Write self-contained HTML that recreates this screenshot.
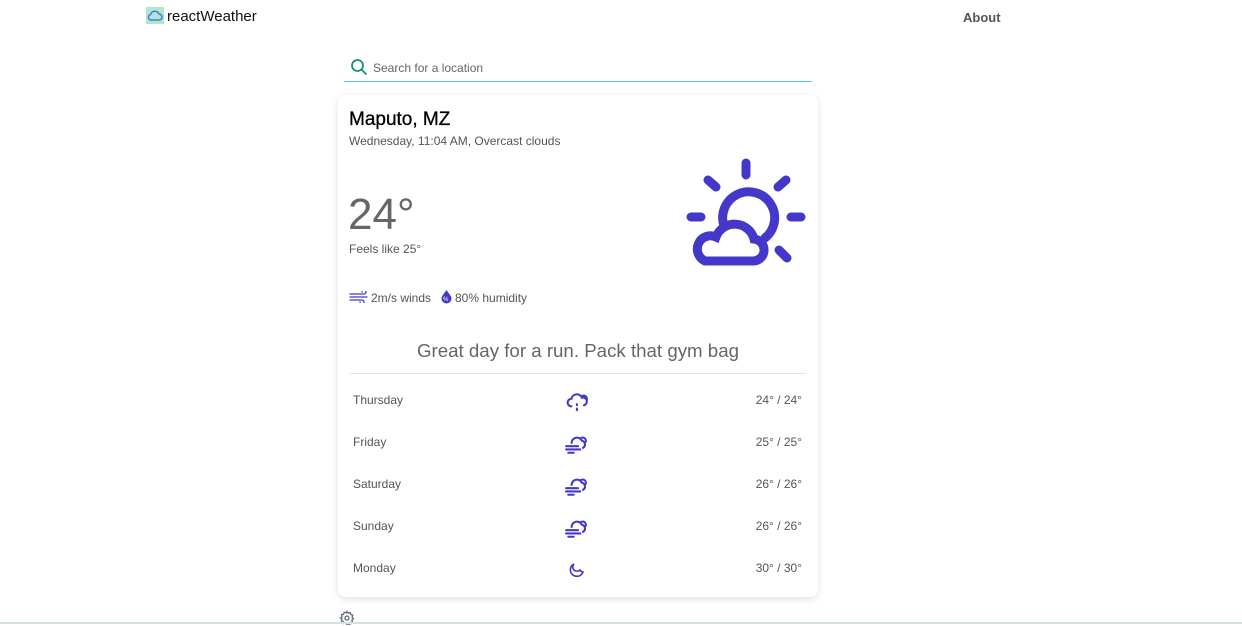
<!DOCTYPE html>
<html><head><meta charset="utf-8"><style>
*{margin:0;padding:0;box-sizing:border-box}
body{width:1242px;height:624px;background:#fff;font-family:"Liberation Sans",sans-serif;position:relative;overflow:hidden;color:#222}
.abs{position:absolute}
.card{left:338px;top:95px;width:480px;height:502px;border-radius:8px;background:#fff;box-shadow:0 2px 8px rgba(0,0,0,.13)}
.row{position:absolute;left:353px;width:451px;font-size:12px;color:#555}
.row .t{position:absolute;right:2px;top:0}
</style></head><body>
<div class="abs" style="left:146px;top:7px;width:18px;height:17px;background:#a8ecc9"></div>
<svg class="abs" style="left:146px;top:7px" width="18" height="17" viewBox="0 0 18 17"><path d="M5 13h8a3 3 0 0 0 0-6 4.5 4.5 0 0 0-8.5 0.5A2.8 2.8 0 0 0 5 13z" fill="none" stroke="#6366f1" stroke-width="1.5"/></svg>
<div class="abs" style="left:167px;top:8px;font-size:15px;color:#111">reactWeather</div>
<div class="abs" style="left:963px;top:10px;font-size:13px;color:#555;font-weight:bold">About</div>
<svg class="abs" style="left:350px;top:58px" width="18" height="18" viewBox="0 0 18 18"><circle cx="7.5" cy="7.5" r="5.5" fill="none" stroke="#16936b" stroke-width="1.8"/><path d="M11.5 11.5l4.5 4.5" stroke="#16936b" stroke-width="1.8" stroke-linecap="round"/></svg>
<div class="abs" style="left:373px;top:61px;font-size:12px;color:#666">Search for a location</div>
<div class="abs" style="left:344px;top:81px;width:468px;height:1px;background:#4fd9a3"></div>
<div class="abs card"></div>
<div class="abs" style="left:349px;top:109px;font-size:19px;color:#000;-webkit-text-stroke:0.3px #000">Maputo, MZ</div>
<div class="abs" style="left:349px;top:134px;font-size:12px;color:#555">Wednesday, 11:04 AM, Overcast clouds</div>
<div class="abs" style="left:348px;top:190px;font-size:44px;color:#666;font-weight:300">24°</div>
<div class="abs" style="left:349px;top:242px;font-size:12px;color:#555">Feels like 25°</div>
<svg class="abs" style="left:680px;top:155px" width="130" height="115" viewBox="680 155 130 115" fill="none" stroke="#4338ca" stroke-width="9" stroke-linecap="round">
<path d="M746 163v12M691 217h10M791 217h10M708 180l8 7M786 180l-8 7M779 250l8 8"/>
<path d="M724 226A26 26 0 1 1 765 238"/>
<path d="M705 261h47a11 11 0 0 0 2-22a20 20 0 0 0-38-2a12 12 0 0 0-11 24z" fill="#fff"/>
</svg>
<svg class="abs" style="left:349px;top:291px" width="20" height="12" viewBox="0 0 20 12" fill="none" stroke="#4338ca" stroke-width="1.3" stroke-linecap="round"><path d="M1 3h14a2 2 0 1 0-2-2M1 6h17M1 9h12a2 2 0 1 1-2 2"/></svg>
<div class="abs" style="left:371px;top:291px;font-size:12px;color:#555">2m/s winds</div>
<svg class="abs" style="left:440px;top:289px" width="13" height="15" viewBox="0 0 13 15"><path d="M6.5 1C4 5 1.5 7 1.5 9.5a5 5 0 0 0 10 0C11.5 7 9 5 6.5 1z" fill="#4338ca"/><text x="3" y="12" font-size="6" fill="#fff" font-family="Liberation Sans">%</text></svg>
<div class="abs" style="left:455px;top:291px;font-size:12px;color:#555">80% humidity</div>
<div class="abs" style="left:338px;width:480px;top:340px;text-align:center;font-size:18.7px;color:#666">Great day for a run. Pack that gym bag</div>
<div class="abs" style="left:350px;top:373px;width:456px;height:1px;background:#e3e3e3"></div>
<div class="row" style="top:393px">Thursday<span class="t">24° / 24°</span></div>
<div class="row" style="top:435px">Friday<span class="t">25° / 25°</span></div>
<div class="row" style="top:477px">Saturday<span class="t">26° / 26°</span></div>
<div class="row" style="top:519px">Sunday<span class="t">26° / 26°</span></div>
<div class="row" style="top:561px">Monday<span class="t">30° / 30°</span></div>
<svg class="abs" style="left:566px;top:391px" width="24" height="22" viewBox="0 0 22 20" fill="none" stroke="#4338ca" stroke-width="1.9" stroke-linecap="round"><path d="M5 14a3.5 3.5 0 0 1 0-7a5 5 0 0 1 9.5-1a3.5 3.5 0 0 1 2 7"/><path d="M14 5a3 3 0 0 1 5 3"/><path d="M10 12v1M10 16v1.5"/></svg>
<svg class="abs" style="left:565px;top:433px" width="24" height="22" viewBox="0 0 22 20" fill="none" stroke="#4338ca" stroke-width="1.9" stroke-linecap="round"><path d="M6 9a5 5 0 0 1 9.5-2a3.5 3.5 0 0 1 1 6.5"/><path d="M14 5a3 3 0 0 1 5 3"/><path d="M1 12h11M1 15h13M3 18h5"/></svg>
<svg class="abs" style="left:565px;top:475px" width="24" height="22" viewBox="0 0 22 20" fill="none" stroke="#4338ca" stroke-width="1.9" stroke-linecap="round"><path d="M6 9a5 5 0 0 1 9.5-2a3.5 3.5 0 0 1 1 6.5"/><path d="M14 5a3 3 0 0 1 5 3"/><path d="M1 12h11M1 15h13M3 18h5"/></svg>
<svg class="abs" style="left:565px;top:517px" width="24" height="22" viewBox="0 0 22 20" fill="none" stroke="#4338ca" stroke-width="1.9" stroke-linecap="round"><path d="M6 9a5 5 0 0 1 9.5-2a3.5 3.5 0 0 1 1 6.5"/><path d="M14 5a3 3 0 0 1 5 3"/><path d="M1 12h11M1 15h13M3 18h5"/></svg>
<svg class="abs" style="left:568px;top:561px" width="18" height="18" viewBox="0 0 18 18" fill="none" stroke="#4338ca" stroke-width="1.6" stroke-linecap="round"><path d="M6 3a6.5 6.5 0 1 0 9 8a4 4 0 0 1-3-2a4 4 0 0 1-6-6z"/></svg>
<svg class="abs" style="left:339px;top:610px" width="16" height="16" viewBox="0 0 16 16" fill="none" stroke="#667" stroke-width="1.3"><circle cx="8" cy="8" r="2"/><path d="M8 1.5l1.3 1.6 2-.6.4 2 2 .7-.6 2 1.4 1.5-1.6 1.3.6 2-2 .4-.7 2-2-.6L8 14.5 6.7 13l-2 .6-.4-2-2-.7.6-2L1.5 8l1.6-1.3-.6-2 2-.4.7-2 2 .6z"/></svg>
<div class="abs" style="left:0;top:622px;width:1242px;height:2px;background:#d5e0e3"></div>
</body></html>
